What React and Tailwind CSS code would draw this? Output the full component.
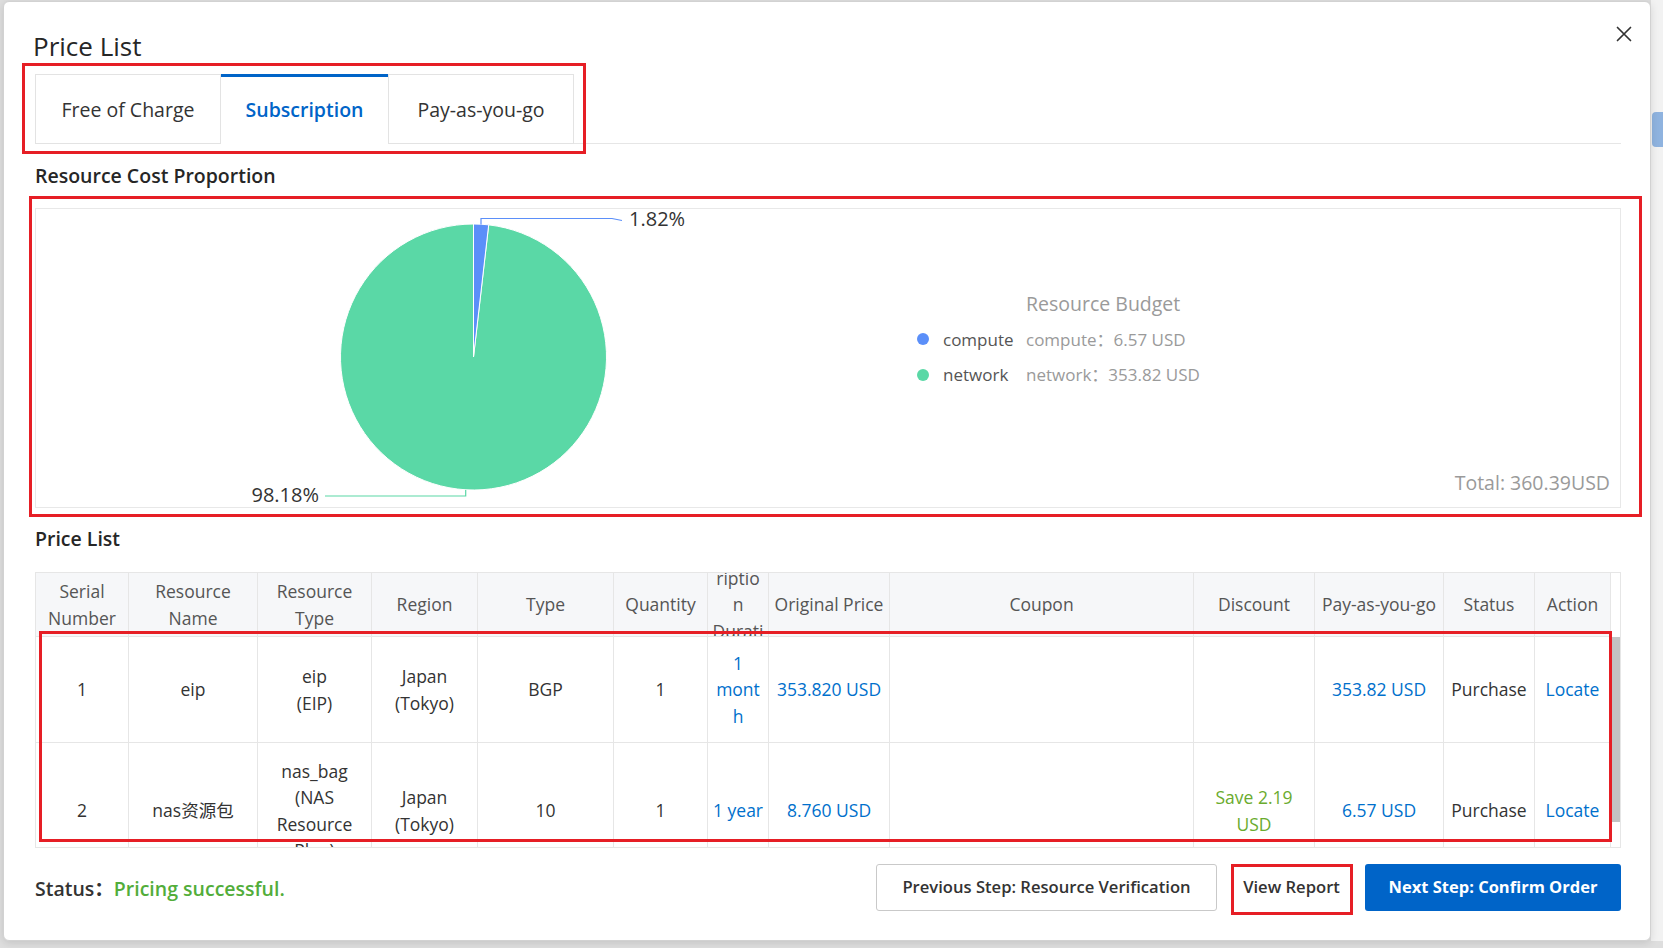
import React from "react";

const headers = [
  ["Serial", "Number"],
  ["Resource", "Name"],
  ["Resource", "Type"],
  ["Region"],
  ["Type"],
  ["Quantity"],
  ["Subsc", "riptio", "n", "Durati", "on"],
  ["Original Price"],
  ["Coupon"],
  ["Discount"],
  ["Pay-as-you-go"],
  ["Status"],
  ["Action"],
];

const rows = [
  {
    h: "h-[106px]",
    cells: [
      [["1"]],
      [["eip"]],
      [["eip", "(EIP)"]],
      [["Japan", "(Tokyo)"]],
      [["BGP"]],
      [["1"]],
      [["1", "mont", "h"], "blue"],
      [["353.820 USD"], "blue"],
      [[]],
      [[]],
      [["353.82 USD"], "blue"],
      [["Purchase"]],
      [["Locate"], "blue"],
    ],
  },
  {
    h: "h-[136px]",
    cells: [
      [["2"]],
      [["nas资源包"]],
      [["nas_bag", "(NAS", "Resource", "Plan)"]],
      [["Japan", "(Tokyo)"]],
      [["10"]],
      [["1"]],
      [["1 year"], "blue"],
      [["8.760 USD"], "blue"],
      [[]],
      [["Save 2.19", "USD"], "green"],
      [["6.57 USD"], "blue"],
      [["Purchase"]],
      [["Locate"], "blue"],
    ],
  },
];

function colorClass(c) {
  if (c === "blue") return "text-[#0070cc]";
  if (c === "green") return "text-[#6aab2e]";
  return "text-[#333333]";
}

function PieChart() {
  const cx = 437.5;
  const cy = 148;
  const r = 133;
  const a = (6.552 * Math.PI) / 180;
  const ex = cx + r * Math.sin(a);
  const ey = cy - r * Math.cos(a);
  return (
    <svg width="881" height="298" viewBox="0 0 881 298" className="shrink-0 overflow-visible" overflow="visible">
      <path
        d={`M ${cx} ${cy} L ${ex} ${ey} A ${r} ${r} 0 1 1 ${cx} ${cy - r} Z`}
        fill="#5AD8A6"
        stroke="#ffffff"
        strokeWidth="1"
      />
      <path
        d={`M ${cx} ${cy} L ${cx} ${cy - r} A ${r} ${r} 0 0 1 ${ex} ${ey} Z`}
        fill="#5B8FF9"
        stroke="#ffffff"
        strokeWidth="1"
      />
      <polyline
        points="445,15.5 445,9.5 576,9.5 586,11.5"
        fill="none"
        stroke="#5B8FF9"
        strokeWidth="1.2"
      />
      <text
        x="593"
        y="9.5"
        dominantBaseline="central"
        fontSize="20"
        fill="#333333"
        fontFamily="Open Sans, sans-serif"
      >
        1.82%
      </text>
      <polyline
        points="429.7,281 429.7,287 289,287"
        fill="none"
        stroke="#5AD8A6"
        strokeWidth="1.2"
      />
      <text
        x="283"
        y="285"
        textAnchor="end"
        dominantBaseline="central"
        fontSize="20"
        fill="#333333"
        fontFamily="Open Sans, sans-serif"
      >
        98.18%
      </text>
    </svg>
  );
}

export default function App() {
  return (
    <div className="relative w-[1663px] h-[948px] overflow-hidden bg-[#dedede] pl-[3px] pt-[1px] font-['Open_Sans','Noto_Sans_CJK_SC',sans-serif]">
      {/* background page hint at right edge */}
      <div className="absolute left-[1651px] top-0 w-[12px] h-[941px] bg-[#f2f2f2]" />
      <div className="absolute left-[1652px] top-[112px] w-[11px] h-[35px] rounded-l-[4px] bg-[#8fb3df]" />

      <div className="relative w-[1648px] h-[940px] bg-white border border-[#d2d2d2] rounded-[6px] shadow-[0_2px_8px_rgba(0,0,0,0.12)] flex flex-col">
        {/* header */}
        <div className="flex justify-between pl-[29px] pr-[18px]">
          <div className="mt-[28px] h-[32px] leading-[32px] text-[26px] font-medium text-[#262626]">
            Price List
          </div>
          <button className="mt-[24px] w-[16px] h-[16px]">
            <svg width="16" height="16" viewBox="0 0 16 16">
              <path d="M1.5 1.5 L14.5 14.5 M14.5 1.5 L1.5 14.5" stroke="#333" strokeWidth="1.7" strokeLinecap="round" />
            </svg>
          </button>
        </div>

        <div className="flex flex-col pl-[31px] pr-[29px]">
          {/* tabs */}
          <div className="mt-[12px] flex h-[70px] border-b border-[#e6e6e6]">
            <div className="w-[186px] h-[70px] pt-[2px] border border-[#e3e3e3] flex items-center justify-center text-[19.5px] text-[#333333]">
              Free of Charge
            </div>
            <div className="w-[167px] h-[70px] -mb-px border-t-[3px] border-t-[#0064c8] border-b border-b-white bg-white flex items-center justify-center text-[19.5px] font-semibold text-[#0064c8]">
              Subscription
            </div>
            <div className="w-[186px] h-[70px] pt-[2px] border border-[#e3e3e3] flex items-center justify-center text-[19.5px] text-[#333333]">
              Pay-as-you-go
            </div>
          </div>

          {/* resource cost proportion */}
          <div className="mt-[18px] h-[28px] leading-[28px] text-[19.5px] font-semibold text-[#262626]">
            Resource Cost Proportion
          </div>
          <div className="relative mt-[18px] h-[300px] flex border border-[#e8e8e8]">
            <PieChart />
            <div className="pt-[77px] grid grid-cols-[109px_auto] auto-rows-[35.5px] items-center">
              <div />
              <div className="text-[19.5px] text-[#9a9a9a]">Resource Budget</div>
              <div className="flex items-center gap-[14px]">
                <span className="w-[12px] h-[12px] rounded-full bg-[#5B8FF9]" />
                <span className="text-[17px] text-[#555555]">compute</span>
              </div>
              <div className="text-[17px] text-[#9a9a9a]">compute：6.57 USD</div>
              <div className="flex items-center gap-[14px]">
                <span className="w-[12px] h-[12px] rounded-full bg-[#5AD8A6]" />
                <span className="text-[17px] text-[#555555]">network</span>
              </div>
              <div className="text-[17px] text-[#9a9a9a]">network：353.82 USD</div>
            </div>
            <div className="absolute right-[10px] bottom-[10px] h-[28px] leading-[28px] text-[19.5px] text-[#9a9a9a]">
              Total: 360.39USD
            </div>
          </div>

          {/* price list */}
          <div className="mt-[17px] h-[28px] leading-[28px] text-[19.5px] font-semibold text-[#262626]">
            Price List
          </div>
          <div className="mt-[19px] w-[1586px] h-[276px] border border-[#e6e6e6] overflow-hidden flex flex-col text-[17.5px] leading-[26.5px]">
            <div className="flex shrink-0">
              <div className="grid grid-cols-[93px_129px_114px_106px_136px_94px_61px_121px_304px_121px_129px_91px_76px] bg-[#f6f7f9]">
                {headers.map((lines, i) => (
                  <div
                    key={i}
                    className="h-[64px] border-r border-b border-[#e6e6e6] overflow-hidden flex flex-col items-center justify-center text-center text-[#555555] whitespace-nowrap"
                  >
                    {lines.map((l, j) => (
                      <div key={j}>{l}</div>
                    ))}
                  </div>
                ))}
              </div>
              <div className="flex-1 bg-white" />
            </div>
            <div className="flex flex-1 min-h-0">
              <div className="flex flex-col">
                {rows.map((row, ri) => (
                  <div
                    key={ri}
                    className="grid grid-cols-[93px_129px_114px_106px_136px_94px_61px_121px_304px_121px_129px_91px_76px] shrink-0"
                  >
                    {row.cells.map(([lines, c], ci) => (
                      <div
                        key={ci}
                        className={`${row.h} border-r border-b border-[#e6e6e6] flex flex-col items-center justify-center text-center whitespace-nowrap ${colorClass(c)}`}
                      >
                        {lines.map((l, j) => (
                          <div key={j}>{l}</div>
                        ))}
                      </div>
                    ))}
                  </div>
                ))}
              </div>
              <div className="flex-1 bg-white">
                <div className="h-[185px] bg-[#c3c3c3]" />
              </div>
            </div>
          </div>

          {/* footer */}
          <div className="mt-[16px] h-[47px] flex items-center justify-between">
            <div className="pt-[2px] text-[19.5px] font-semibold">
              <span className="text-[#333333]">Status：</span>
              <span className="text-[#52ad3a]">Pricing successful.</span>
            </div>
            <div className="flex items-center">
              <button className="w-[341px] h-[47px] border border-[#c9c9c9] rounded-[3px] bg-white text-[16.6px] font-semibold text-[#333333]">
                Previous Step: Resource Verification
              </button>
              <button className="ml-[15px] w-[119px] h-[47px] rounded-[3px] bg-white text-[16.6px] font-semibold text-[#333333]">
                View Report
              </button>
              <button className="ml-[14px] w-[256px] h-[47px] rounded-[3px] bg-[#0064c8] text-[16.5px] font-bold text-white">
                Next Step: Confirm Order
              </button>
            </div>
          </div>
        </div>
      </div>

      {/* red annotation boxes */}
      <div className="absolute left-[22px] top-[63px] w-[564px] h-[91px] border-[3px] border-[#e61e25] pointer-events-none" />
      <div className="absolute left-[29px] top-[196px] w-[1613px] h-[321px] border-[3px] border-[#e61e25] pointer-events-none" />
      <div className="absolute left-[39px] top-[631px] w-[1573px] h-[211px] border-[3px] border-[#e61e25] pointer-events-none" />
      <div className="absolute left-[1231px] top-[864px] w-[122px] h-[51px] border-[3px] border-[#e61e25] pointer-events-none" />
    </div>
  );
}
